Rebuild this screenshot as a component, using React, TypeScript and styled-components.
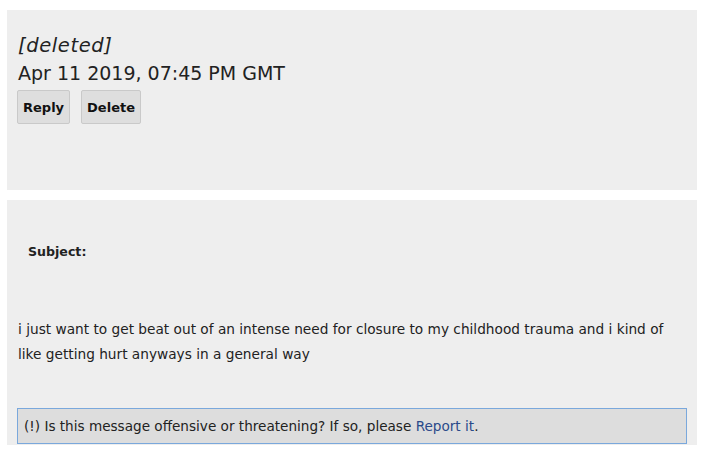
import React from "react";
import styled, { createGlobalStyle } from "styled-components";

const Global = createGlobalStyle`
  html, body { margin: 0; padding: 0; background: #ffffff; }
  body { font-family: "DejaVu Sans", Verdana, sans-serif; color: #222222; }
`;

const Page = styled.div`
  display: flex;
  flex-direction: column;
  gap: 10px;
  padding: 10px 11px 0 7px;
  width: 690px;
`;

const Panel = styled.section<{ $height: number }>`
  background: #eeeeee;
  height: ${(p) => p.$height}px;
  box-sizing: border-box;
  display: flex;
  flex-direction: column;
`;

const Header = styled.div`
  padding: 23px 10px 0 10px;
  display: flex;
  flex-direction: column;
`;

const Author = styled.div`
  font-size: 19.5px;
  font-style: italic;
  letter-spacing: 0.6px;
  line-height: 26px;
  padding-left: 1px;
`;

const DateLine = styled.div`
  font-size: 19px;
  line-height: 28px;
  padding-left: 1px;
`;

const Actions = styled.div`
  display: flex;
  gap: 11px;
  margin-top: 3px;
`;

const Button = styled.button`
  font-family: "DejaVu Sans", Verdana, sans-serif;
  font-weight: bold;
  font-size: 13px;
  color: #111111;
  background: #dedede;
  border: 1px solid #c9c9c9;
  border-radius: 2px;
  height: 34px;
  padding: 0 5px;
  cursor: pointer;
`;

const Subject = styled.div`
  font-size: 12.6px;
  font-weight: bold;
  padding: 43px 0 0 21px;
  line-height: 18px;
`;

const Body = styled.p`
  margin: 0;
  padding: 56px 11px 0 11px;
  font-size: 13.7px;
  line-height: 25px;
`;

const Report = styled.div`
  margin: auto 10px 1px 10px;
  background: #dddddd;
  border: 1px solid #7aa8dc;
  height: 36px;
  box-sizing: border-box;
  display: flex;
  align-items: center;
  padding: 0 6px;
  font-size: 13.6px;
`;

const ReportLink = styled.a`
  color: #2a4a8a;
  text-decoration: none;
`;

export default function App() {
  return (
    <>
      <Global />
      <Page>
        <Panel $height={180}>
          <Header>
            <Author>[deleted]</Author>
            <DateLine>Apr 11 2019, 07:45 PM GMT</DateLine>
            <Actions>
              <Button>Reply</Button>
              <Button>Delete</Button>
            </Actions>
          </Header>
        </Panel>
        <Panel $height={245}>
          <Subject>Subject:</Subject>
          <Body>
            i just want to get beat out of an intense need for closure to my childhood trauma and i kind of like getting hurt anyways in a general way
          </Body>
          <Report>
            (!) Is this message offensive or threatening? If so, please&nbsp;<ReportLink href="#">Report it</ReportLink>.
          </Report>
        </Panel>
      </Page>
    </>
  );
}
